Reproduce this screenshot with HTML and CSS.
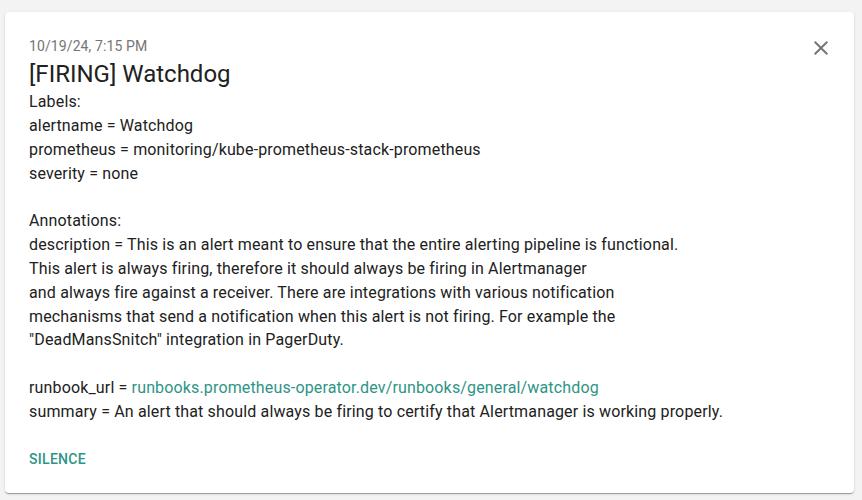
FILE: index.html
```html
<!DOCTYPE html>
<html>
<head>
<meta charset="utf-8">
<link rel="stylesheet" href="styles.css">
</head>
<body>
<div class="card">
  <div class="head">
    <div>
      <div class="date">10/19/24, 7:15 PM</div>
      <div class="title">[FIRING] Watchdog</div>
    </div>
    <button class="close" aria-label="close">
      <svg viewBox="0 0 24 24" width="24" height="24"><path fill="#757575" d="M19 6.41 17.59 5 12 10.59 6.41 5 5 6.41 10.59 12 5 17.59 6.41 19 12 13.41 17.59 19 19 17.59 13.41 12z"/></svg>
    </button>
  </div>
  <div class="body">
    <div>Labels:</div>
    <div>alertname = Watchdog</div>
    <div>prometheus = monitoring/kube-prometheus-stack-prometheus</div>
    <div>severity = none</div>
    <div class="blank"></div>
    <div>Annotations:</div>
    <div>description = This is an alert meant to ensure that the entire alerting pipeline is functional.</div>
    <div>This alert is always firing, therefore it should always be firing in Alertmanager</div>
    <div>and always fire against a receiver. There are integrations with various notification</div>
    <div>mechanisms that send a notification when this alert is not firing. For example the</div>
    <div>"DeadMansSnitch" integration in PagerDuty.</div>
    <div class="blank"></div>
    <div>runbook_url = <a class="link" href="#">runbooks.prometheus-operator.dev/runbooks/general/watchdog</a></div>
    <div>summary = An alert that should always be firing to certify that Alertmanager is working properly.</div>
  </div>
  <div class="actions">
    <button class="silence">Silence</button>
  </div>
</div>
</body>
</html>
```
FILE: styles.css
```css
html, body {
  margin: 0;
  padding: 0;
}
body {
  background: #f3f3f3;
  font-family: Roboto, "Noto Sans", sans-serif;
  color: rgba(0,0,0,0.87);
  padding: 12px 8px 6px 5px;
}
.card {
  background: #fff;
  border-radius: 4px;
  box-shadow: 0 2px 1px -1px rgba(0,0,0,0.2), 0 1px 1px 0 rgba(0,0,0,0.14), 0 1px 3px 0 rgba(0,0,0,0.12);
  padding: 24px 24px 0 24px;
  height: 481px;
  box-sizing: border-box;
}
.head {
  display: flex;
  justify-content: space-between;
  align-items: flex-start;
}
.date {
  font-size: 14px;
  line-height: 20px;
  letter-spacing: 0.1px;
  color: #757575;
}
.title {
  font-size: 24px;
  line-height: 32px;
  margin-top: 2px;
  color: #212121;
}
.close {
  background: none;
  border: none;
  padding: 0;
  margin: 0 -3px 0 0;
  width: 24px;
  height: 24px;
  cursor: pointer;
}
.close svg { display: block; }
.body {
  font-size: 16px;
  line-height: 23.85px;
  letter-spacing: 0.15px;
  color: #212121;
}
.blank { height: 23.85px; }
.link {
  color: #2e9486;
  text-decoration: none;
}
.actions {
  margin-top: 25px;
}
.silence {
  background: none;
  border: none;
  padding: 0;
  font-family: Roboto, sans-serif;
  font-weight: 500;
  font-size: 14px;
  text-transform: uppercase;
  color: #2e9486;
  letter-spacing: 0.3px;
  cursor: pointer;
}
```
